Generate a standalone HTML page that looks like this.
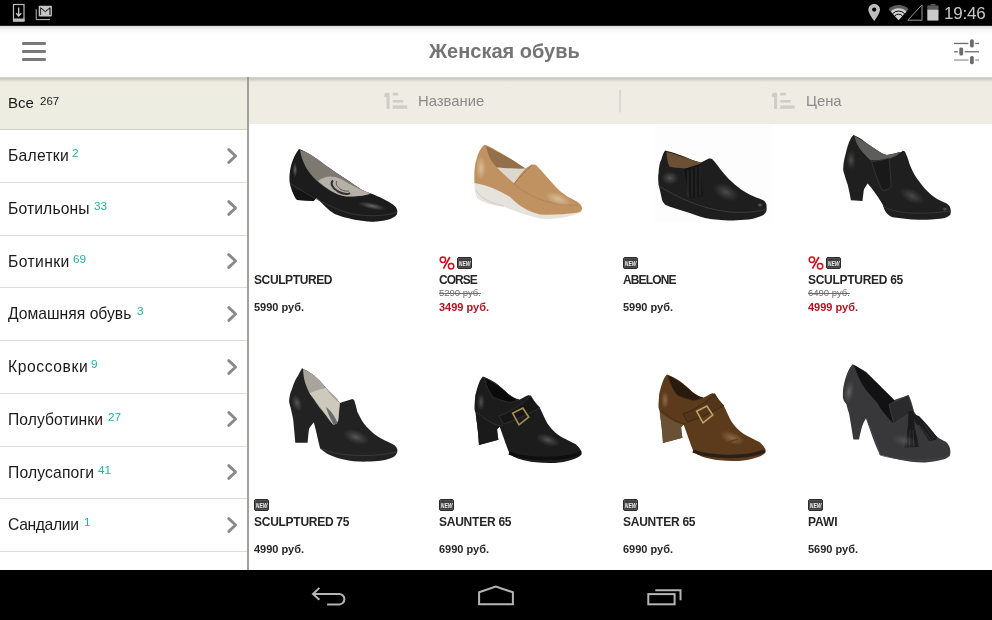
<!DOCTYPE html>
<html><head><meta charset="utf-8">
<style>
*{margin:0;padding:0;box-sizing:border-box}
html,body{width:992px;height:620px;overflow:hidden;background:#fff;font-family:"Liberation Sans",sans-serif}
.a{position:absolute}
.t{position:absolute;white-space:nowrap;line-height:1;will-change:transform}
#status{left:0;top:0;width:992px;height:26px;background:linear-gradient(#000 25px,#262626 25px);z-index:5}
#action{left:0;top:25px;width:992px;height:52px;background:#fff}
#action .sh2{left:0;top:1px;width:992px;height:10px;background:linear-gradient(#dcdcdc,#e8e8e8 15%,#f5f5f5 35%,#fbfbfb 60%,#fff)}
#action .sh{left:0;top:0;width:992px;height:11px;background:linear-gradient(#ececec,#fff)}
#side{left:0;top:77px;width:247px;height:493px;background:#fff;overflow:hidden}
#sdiv{left:247px;top:77px;width:2px;height:493px;background:#a0a09c}
#sel{left:0;top:77px;width:247px;height:52px;background:#eeede1}
.sep{position:absolute;left:0;width:247px;height:1px;background:#dcdcd8}
#sort{left:249px;top:77px;width:743px;height:47px;background:#efece4}
#hshadow{left:0;top:77px;width:992px;height:5px;background:linear-gradient(rgba(150,150,130,.26) 0px,rgba(150,150,130,.26) 1px,rgba(140,140,120,.38) 1px,rgba(140,140,120,.38) 2px,rgba(140,140,120,.27) 2px,rgba(140,140,120,.27) 3px,rgba(140,140,120,.17) 3px,rgba(140,140,120,.17) 4px,rgba(140,140,120,.08) 4px)}
#nav{left:0;top:570px;width:992px;height:50px;background:#000}
.it{font-size:15.7px;color:#1a1a1a}
.cnt{font-size:11.8px;color:#22b39a}
.nm{font-size:12px;font-weight:bold;color:#262626;letter-spacing:-0.4px}
.pr{font-size:11px;font-weight:bold;color:#262626}
.prs{font-size:11px;font-weight:bold;color:#b3121e}
.old{font-size:9.5px;color:#6d6d6d;text-decoration:line-through}
.chev{position:absolute;left:226px;width:12px;height:16px}
.newb{position:absolute;width:15px;height:12px;background:#4a4a4a;border-radius:1.5px;color:#fff;font-size:6.5px;font-weight:bold;font-style:italic;line-height:12px;text-align:center;letter-spacing:-0.3px}
</style></head><body>

<!-- status bar -->
<div id="status" class="a">
<svg class="a" style="left:0;top:0" width="992" height="25">
  <!-- download -->
  <rect x="13.5" y="4.5" width="10.5" height="16.5" fill="none" stroke="#bdbdbd" stroke-width="1.2"/>
  <rect x="13" y="18.5" width="11.5" height="3" fill="#bdbdbd"/>
  <path d="M18.7 7.5V15.5M16.2 13.2L18.7 16L21.2 13.2" fill="none" stroke="#c8c8c8" stroke-width="1.3"/>
  <!-- gmail -->
  <path d="M36.2 9.2V19.6H50" fill="none" stroke="#bdbdbd" stroke-width="1"/>
  <rect x="38.7" y="5.8" width="13.2" height="10.8" rx="0.8" fill="#c4c4c4"/>
  <path d="M40.6 7.8L45.3 11.6L50 7.8V15" fill="none" stroke="#000" stroke-width="1"/>
  <path d="M40.6 7.8V15" stroke="#000" stroke-width="0.8"/>
  <!-- location -->
  <path d="M874.2 4C870.8 4 868.3 6.6 868.3 9.8C868.3 13.6 874.2 21 874.2 21S880 13.6 880 9.8C880 6.6 877.6 4 874.2 4Z" fill="#bdbdbd"/>
  <circle cx="874.2" cy="9.6" r="2.1" fill="#000"/>
  <!-- wifi -->
  <path d="M888.6 9.2A14 14 0 0 1 908.6 9.2L898.6 20.2Z" fill="#5c5c5c"/>
  <path d="M890.8 11.6A11 11 0 0 1 906.4 11.6L898.6 20.2Z" fill="#cfcfcf"/>
  <path d="M892.6 13.6A8.3 8.3 0 0 1 904.6 13.6" fill="none" stroke="#000" stroke-width="1"/>
  <path d="M894.7 15.9A5.3 5.3 0 0 1 902.5 15.9" fill="none" stroke="#000" stroke-width="1"/>
  <!-- signal -->
  <path d="M907.8 20.2L922 4.8V20.2Z" fill="none" stroke="#9a9a9a" stroke-width="1"/>
  <!-- battery -->
  <rect x="930.5" y="4" width="5" height="1.6" fill="#5a5a5a"/>
  <rect x="927.3" y="5.5" width="11.2" height="4" fill="#5a5a5a"/>
  <rect x="927.3" y="9.5" width="11.2" height="11.1" fill="#c9c9c9"/>
</svg>
<div class="t" style="left:944px;top:5px;font-size:17px;color:#c8c8c8;letter-spacing:-0.2px">19:46</div>
</div>

<!-- action bar -->
<div id="action" class="a">
  <div class="a sh2"></div>
  <svg class="a" style="left:0;top:0" width="992" height="52">
    <rect x="22" y="17" width="24" height="3" rx="1" fill="#7a7a7a"/>
    <rect x="22" y="25" width="24" height="3" rx="1" fill="#7a7a7a"/>
    <rect x="22" y="33" width="24" height="3" rx="1" fill="#7a7a7a"/>
    <!-- filter icon -->
    <g fill="#6c6c70">
      <rect x="954" y="17.8" width="14.5" height="1.3"/>
      <rect x="975.2" y="17.8" width="3.8" height="1.3"/>
      <rect x="970" y="14.2" width="3.8" height="8.2" rx="1.6"/>
      <rect x="954" y="26.1" width="3.8" height="1.3"/>
      <rect x="964.6" y="26.1" width="14.4" height="1.3"/>
      <rect x="959.3" y="22.4" width="3.8" height="8.2" rx="1.6"/>
      <rect x="954" y="34.4" width="14.5" height="1.3" fill="#9a9a9e"/>
      <rect x="975.2" y="34.4" width="3.8" height="1.3" fill="#9a9a9e"/>
      <rect x="970" y="31" width="3.8" height="8.2" rx="1.6"/>
    </g>
  </svg>
  <div class="t" style="left:429px;top:16px;font-size:20px;font-weight:bold;color:#747478">Женская обувь</div>
</div>

<!-- sidebar -->
<div id="side" class="a"></div>
<div id="sel" class="a"></div>
<div class="t" style="left:8.3px;top:95.2px;font-size:15px;color:#1a1a1a">Все</div>
<div class="t" style="left:40px;top:95.6px;font-size:11.5px;color:#1a1a1a">267</div>

<div id="items">
<div class="sep" style="top:129.00px;background:#cfcfc7"></div>
<div class="t it" style="left:8px;top:148.21px;letter-spacing:0.25px">Балетки</div>
<div class="t cnt" style="left:72.3px;top:148.11px">2</div>
<svg class="a" style="left:222px;top:143.70px" width="20" height="24"><path d="M6.8 5.6L13.6 12L6.8 18.4" fill="none" stroke="#8a8a8a" stroke-width="2.9" stroke-linecap="round" stroke-linejoin="round"/></svg>
<div class="sep" style="top:181.75px"></div>
<div class="t it" style="left:8px;top:200.96px;letter-spacing:0.12px">Ботильоны</div>
<div class="t cnt" style="left:93.8px;top:200.86px">33</div>
<svg class="a" style="left:222px;top:196.45px" width="20" height="24"><path d="M6.8 5.6L13.6 12L6.8 18.4" fill="none" stroke="#8a8a8a" stroke-width="2.9" stroke-linecap="round" stroke-linejoin="round"/></svg>
<div class="sep" style="top:234.50px"></div>
<div class="t it" style="left:8px;top:253.71px;letter-spacing:0.38px">Ботинки</div>
<div class="t cnt" style="left:73.2px;top:253.61px">69</div>
<svg class="a" style="left:222px;top:249.20px" width="20" height="24"><path d="M6.8 5.6L13.6 12L6.8 18.4" fill="none" stroke="#8a8a8a" stroke-width="2.9" stroke-linecap="round" stroke-linejoin="round"/></svg>
<div class="sep" style="top:287.25px"></div>
<div class="t it" style="left:8px;top:306.46px;letter-spacing:0px">Домашняя обувь</div>
<div class="t cnt" style="left:136.9px;top:306.36px">3</div>
<svg class="a" style="left:222px;top:301.95px" width="20" height="24"><path d="M6.8 5.6L13.6 12L6.8 18.4" fill="none" stroke="#8a8a8a" stroke-width="2.9" stroke-linecap="round" stroke-linejoin="round"/></svg>
<div class="sep" style="top:340.00px"></div>
<div class="t it" style="left:8px;top:359.21px;letter-spacing:0.57px">Кроссовки</div>
<div class="t cnt" style="left:91.4px;top:359.11px">9</div>
<svg class="a" style="left:222px;top:354.70px" width="20" height="24"><path d="M6.8 5.6L13.6 12L6.8 18.4" fill="none" stroke="#8a8a8a" stroke-width="2.9" stroke-linecap="round" stroke-linejoin="round"/></svg>
<div class="sep" style="top:392.75px"></div>
<div class="t it" style="left:8px;top:411.96px;letter-spacing:0.06px">Полуботинки</div>
<div class="t cnt" style="left:108.4px;top:411.86px">27</div>
<svg class="a" style="left:222px;top:407.45px" width="20" height="24"><path d="M6.8 5.6L13.6 12L6.8 18.4" fill="none" stroke="#8a8a8a" stroke-width="2.9" stroke-linecap="round" stroke-linejoin="round"/></svg>
<div class="sep" style="top:445.50px"></div>
<div class="t it" style="left:8px;top:464.71px;letter-spacing:0.14px">Полусапоги</div>
<div class="t cnt" style="left:98.3px;top:464.61px">41</div>
<svg class="a" style="left:222px;top:460.20px" width="20" height="24"><path d="M6.8 5.6L13.6 12L6.8 18.4" fill="none" stroke="#8a8a8a" stroke-width="2.9" stroke-linecap="round" stroke-linejoin="round"/></svg>
<div class="sep" style="top:498.25px"></div>
<div class="t it" style="left:8px;top:517.46px;letter-spacing:-0.36px">Сандалии</div>
<div class="t cnt" style="left:83.9px;top:517.36px">1</div>
<svg class="a" style="left:222px;top:512.95px" width="20" height="24"><path d="M6.8 5.6L13.6 12L6.8 18.4" fill="none" stroke="#8a8a8a" stroke-width="2.9" stroke-linecap="round" stroke-linejoin="round"/></svg>
<div class="sep" style="top:551.00px"></div>
<svg class="a" style="left:222px;top:565.70px" width="20" height="24"><path d="M6.8 5.6L13.6 12L6.8 18.4" fill="none" stroke="#8a8a8a" stroke-width="2.9" stroke-linecap="round" stroke-linejoin="round"/></svg>
</div><!--/items-->

<!-- sort bar -->
<div id="sort" class="a">
  <svg class="a" style="left:0;top:0" width="743" height="46">
    <g fill="#cfcdc8">
      <path d="M135.5 16.5L138 15.8H140.6V32H137.5V19.8L135.5 20.4Z"/>
      <rect x="143.7" y="15.7" width="5.5" height="2.8"/>
      <rect x="143.7" y="23" width="10.5" height="2.6"/>
      <rect x="143.7" y="28.4" width="14.5" height="3.4"/>
    </g>
    <g fill="#cfcdc8" transform="translate(387.5,0)">
      <path d="M135.5 16.5L138 15.8H140.6V32H137.5V19.8L135.5 20.4Z"/>
      <rect x="143.7" y="15.7" width="5.5" height="2.8"/>
      <rect x="143.7" y="23" width="10.5" height="2.6"/>
      <rect x="143.7" y="28.4" width="14.5" height="3.4"/>
    </g>
    <rect x="370.2" y="12.6" width="1.8" height="22.8" fill="#d8d7d0"/>
  </svg>
  <div class="t" style="left:169.3px;top:16.6px;font-size:14.8px;color:#8a8a8a">Название</div>
  <div class="t" style="left:557px;top:16.6px;font-size:14.8px;color:#8a8a8a">Цена</div>
</div>
<div id="hshadow" class="a"></div>
<div id="sdiv" class="a"></div>

<!--shoes--><svg class="a" style="left:0;top:0" width="992" height="620" id="shoes"><defs>
 <linearGradient id="gBlk" x1="0" y1="0" x2="1" y2="1"><stop offset="0" stop-color="#2a2a2a"/><stop offset="0.5" stop-color="#1b1b1b"/><stop offset="1" stop-color="#2e2e2e"/></linearGradient>
 <radialGradient id="hl"><stop offset="0" stop-color="#b0b0b0" stop-opacity="0.9"/><stop offset="1" stop-color="#909090" stop-opacity="0"/></radialGradient>
 <radialGradient id="hl2"><stop offset="0" stop-color="#808080" stop-opacity="0.8"/><stop offset="1" stop-color="#606060" stop-opacity="0"/></radialGradient>
 <linearGradient id="gTan" x1="0" y1="0" x2="1" y2="1"><stop offset="0" stop-color="#c79d6f"/><stop offset="1" stop-color="#b88a5a"/></linearGradient>
 <linearGradient id="gBrn" x1="0" y1="0" x2="1" y2="1"><stop offset="0" stop-color="#6e4a2a"/><stop offset="1" stop-color="#5a3a20"/></linearGradient>
 <radialGradient id="hlT"><stop offset="0" stop-color="#dcc09c" stop-opacity="0.9"/><stop offset="1" stop-color="#dcc09c" stop-opacity="0"/></radialGradient>
 <filter id="brown" x="0" y="0" width="100%" height="100%" color-interpolation-filters="sRGB"><feColorMatrix type="matrix" values="0 0 0 0 0.38  0 0 0 0 0.25  0 0 0 0 0.14  0 0 0 1 0"/></filter>
 <radialGradient id="hlB"><stop offset="0" stop-color="#a88460" stop-opacity="0.9"/><stop offset="1" stop-color="#a88460" stop-opacity="0"/></radialGradient>
 <filter id="bl" x="-50%" y="-50%" width="200%" height="200%"><feGaussianBlur stdDeviation="1.2"/></filter>
 <filter id="bl2" x="-50%" y="-50%" width="200%" height="200%"><feGaussianBlur stdDeviation="0.6"/></filter>
</defs>
<!--s1-->
<path d="M299,149 C304,150 316,158 325,165 C335,172 352,183 362,190 C366,192 369,193 371,193.5 C380,197 388,201 393,204.5 C397,207.5 398,211 397,214 C395,218 388,220.5 377,221.6 C368,222 355,220 345,217.4 C340,216 337,215 335,214.3 C328,210 322,203 316.5,198 L313.5,201 L297.5,200 C294,196 290,188 289.5,181 C289,170 292,158 299,149 Z" fill="#1c1c1c"/>
<path d="M300,150 C310,153 318,159 325,165 C335,172 352,183 362,190 C366,192 369,193 371,193.5 C366,195.5 355,197 345,196 C335,195 325,188 316,180 C308,172 302,163 300,150 Z" fill="#7d7971"/>
<path d="M318,181 C326,188 336,195 346,196.5 C356,197 366,195.5 370,193.5 C360,190 350,184 340,178.5 C332,175 324,176 318,181Z" fill="#b5b1a8"/>
<path d="M333,180.5 C330,183 332,188 338,191.5 C343,194 348,194.5 350,193" fill="none" stroke="#303030" stroke-width="2"/><path d="M337,181 C335,183.5 337,187 341,189.5 C344,191 347,191.5 349,191" fill="none" stroke="#5a5a5a" stroke-width="1"/>
<path d="M297,200 L313.5,201 L316.5,198 C312,193 300,190 292,189 C293,194 295,198 297,200Z" fill="#141414"/>
<path d="M290,183 C300,190 325,205 345,212 C360,217 385,217 397,212" fill="none" stroke="#3c3c3c" stroke-width="0.8"/>
<ellipse cx="372" cy="206" rx="15" ry="3.5" transform="rotate(12 372 206)" fill="url(#hl2)"/>
<ellipse cx="295" cy="170" rx="2.2" ry="8" fill="url(#hl2)"/>

<!--s2-->
<path d="M474.5,178 C474,188 475,195 478,199 C482,202 492,205 504,207 C515,211 528,216 540,218.5 C555,220 570,217 581,212.6 C582,211 582,210 581,209 Z" fill="#e6e3dd"/>
<path d="M476,190 C480,198 490,203 504,206" fill="none" stroke="#d2cec6" stroke-width="1"/>
<path fill-rule="nonzero" d="M484.7,144.8 C489,146 496,150 509.5,158.3 C516,162 521,166 525.3,168.5 L531.8,164.6 C534,164.3 535.5,164.6 536.3,165.2 C543,172 551,182 558.9,190 C565,195.5 570,198 575,200.5 C580,203 582.5,206 582,209 C581.5,211.5 579,212.5 576,212.8 C565,214.5 550,215 540,214.5 C528,212 518,205 510,197 C500,191 488,185 474.5,183 C474,175 474.5,165 476.2,160.6 C478,153 481,147 484.7,144.8Z" fill="#c09262"/>
<path d="M486,146 C492,149 502,154 509.5,158.3 C516,162 521,166 525.3,168.5 C518,169 508,168.5 497,167.5 C491,162 488,155 486,146Z" fill="#947049"/>
<path d="M497,167.5 C508,168.5 518,169 525.3,168.5 L519.7,175.3 L514,183.2 C508,178 501,172 497,167.5Z" fill="#ddd8ce"/>
<path d="M531.8,165 C526,171 519,177 514,184" fill="none" stroke="#9a7650" stroke-width="1"/>
<path d="M514,184 C530,198 555,207 578,205" fill="none" stroke="#a88258" stroke-width="0.8"/>
<ellipse cx="481" cy="168" rx="5" ry="12" fill="url(#hlT)"/>
<ellipse cx="558" cy="199" rx="14" ry="6" transform="rotate(20 558 199)" fill="url(#hlT)"/>

<!--s3-->
<rect x="654.5" y="124.8" width="117" height="98" fill="#fdfdfd"/>
<path d="M665.2,150.6 C672,152 683,156 691.7,159.8 C695,161 698,162 701,162.5 L708.9,158.5 C710.5,158.3 711.5,158.6 712.1,159.1 C715,162 718,166 720.6,169.4 C724,174 728,178 731.5,181.5 C736,185.5 740,189 743.5,191.1 C748,194 752,196 756.9,197.8 C760,199 762.5,199.8 764.1,200.8 C766,202.5 767,205 766.5,206.9 C766.8,208.5 766.6,209.5 766.5,210.5 C766,212.5 764.5,214.5 762.9,215.3 C758,217.5 753,219 748.4,219.6 C740,220.5 732,220.5 724.2,220.2 C716,219.8 708,218.8 705,218 C698,216 691,213.5 685,211.5 C677,209 670,207 665.2,204.8 C663,202 662,200.5 662,199.5 C661,195 660,190 658.6,185 C658,178 658,176 658.6,173.1 C659,166 660,162 661.3,159.8 C662.5,155 664,152 665.2,150.6Z" fill="#1e1e1e"/>
<path d="M666.5,152 C675,154 686,158 695,161 L701,162.5 C700,164 699,165 698.3,165.1 C694,167 690,168 685,168.5 C678,168 673,167.5 669.2,166.5 C667.5,162 666.5,157 666.5,152Z" fill="#6d5033"/>
<path d="M684,169 L700,164 L703,196 L690,198Z" fill="#151515"/>
<path d="M688,170V197M692,168.5V197M696,167V197M700,166V196" stroke="#3c3c3c" stroke-width="0.7"/>
<path d="M659,186 C675,196 700,209 730,212 C745,213 758,212 766,209" fill="none" stroke="#3e3e3e" stroke-width="0.9"/>
<ellipse cx="670" cy="178" rx="9" ry="7" fill="url(#hl2)" opacity="0.7"/>
<ellipse cx="726" cy="192" rx="14" ry="8" transform="rotate(25 726 192)" fill="url(#hl2)" opacity="0.6"/>
<ellipse cx="760" cy="205" rx="3" ry="2" fill="url(#hl)" opacity="0.6"/>

<!--s4-->
<path d="M853.5,135.1 C858,137 862,139.5 863.8,140.9 C868,144 873,147.5 876.7,150 C880,152.5 884,154.5 887.1,155.1 C892,154 897,152.5 901.3,151.9 L902.6,150.8 C904,151 905,151.5 905.2,152.1 C907,156 908.5,160 909.7,164.4 C911.5,169 913.5,173 916.1,177.3 C919,181.5 922,185.5 925.2,188.9 C928.5,192.5 932,195.5 935.5,197.9 C939,200 942.5,201.5 945.8,203.1 C948.5,204.5 950,206.5 950.3,208.2 C951,210.5 951,213 950.3,214.7 C948.5,216.5 945.5,218 941.9,218.5 C934,219.5 926,220 918.7,219.8 C910,219.5 900,218.5 892.9,217.3 C887,215.5 884,210 883.2,205.5 C880,200 878,197 876.7,195.2 C873,190 870,186 867.7,183.5 C866,186 864.5,188 863.8,190 C863.3,194 862.8,198 862.5,201 L850.9,200.3 C850,195 849,190 847.7,184.8 C846.5,181 845,177.5 844.5,174.5 C843.5,172 843,170 843.2,168 C843.5,162 844.5,158 845.7,153.8 C847,148 848.5,143 850.3,139.6 C851.5,137.5 852.5,136 853.5,135.1Z" fill="#1f1f1f"/>
<path d="M854.5,136 C860,139 868,144 876.7,150 C880,152.5 884,154.5 887.1,155.1 C892,154 897,152.5 901.3,151.9 C898,154.5 893,158 887.1,159 C880,160 875,160.5 870.3,160.3 C865,155 860,150 857.4,144.8 C856,142 855,139 854.5,136Z" fill="#5d5d5b"/>
<path d="M871.6,161.6 C878,161 885,159.5 889,158 C890,168 891,180 891,186 C889,190 885,191 882,190 C878,182 874,170 871.6,161.6Z" fill="#191919" stroke="#3a3a3a" stroke-width="0.8"/>
<path d="M883,206 C895,214 920,215 950,211" fill="none" stroke="#3a3a3a" stroke-width="0.9"/>
<ellipse cx="851" cy="160" rx="5" ry="10" fill="url(#hl2)" opacity="0.6"/>
<ellipse cx="912" cy="196" rx="14" ry="7" transform="rotate(25 912 196)" fill="url(#hl2)" opacity="0.55"/>
<ellipse cx="945" cy="209" rx="3" ry="2" fill="url(#hl)" opacity="0.5"/>

<!--s5-->
<path d="M302.1,368.2 C306,370 309,372 312.4,374.3 C317,378 322,383 326.1,388 C330,392.5 334,396 337,399 C338,400.5 339,402 339.8,403.1 L352.3,399 C353.2,399.3 353.8,399.8 354.2,400.3 C355.5,404 356.5,408 357.4,411.9 C359.5,416 361.5,420 363.9,423.5 C367,427.5 370.5,431 374.2,433.9 C378.5,437 383,439.5 387.1,441.6 C390,443 393,444.5 394.8,445.5 C396.5,447 397.5,449 397.4,450.6 C397.6,453 396,455.5 393.5,457.1 C389,459.5 383,460.5 378.1,461 C372,461.5 365,461.8 358.7,461.6 C352,461 345,460 339.4,458.4 C334,457 330,455 326.5,453.2 C323.5,451.5 321.5,449.5 320,448.1 C318,440 316,430 313.8,422.3 C311.5,425 310,427 309,429.1 C308.5,433 308,438 307.6,442.8 L295.3,442.8 C294.5,435 294,427 293.2,419.5 C292.3,415 291.5,411 290.5,407.2 C289.5,404 289,402 289.1,400.4 C289.5,396 290.5,392 291.8,389.4 C293.5,384 295.5,379 298,375.7 C299.5,372.5 301,370 302.1,368.2Z" fill="#222"/>
<path d="M303,369 C306,370.5 309,372 312.4,374.3 C317,378 322,383 326.1,388 C330,392.5 334,396 337,399 C338,400.5 339,402 339.8,403.1 C339.5,409 339,416 338.1,421 C336.5,422.5 335,424 333.6,425 C330,421 325,414 319.2,407.2 C315,401 312,397 309.7,393.5 C307.5,389 306,385 305.5,383.9 C304,379 303.2,374 303,369Z" fill="#a8a49c"/>
<path d="M309.7,393.5 C315,400 322,409 330.2,420.9 L333.6,425 C335,424 336.5,422.5 338.1,421 C338.5,414 339,409 339.8,403.1 C336,400 330,395 326.1,388 C320,389 314,391 309.7,393.5Z" fill="#cdc9bd"/>
<path d="M326,407 C330,410 335,416 337.7,423.6 L333.6,425 C331,420 328,414 326,407Z" fill="#6a6a6a"/>
<path d="M320,448 C335,456 370,458 397,452" fill="none" stroke="#3c3c3c" stroke-width="0.9"/>
<ellipse cx="297" cy="403" rx="5" ry="9" transform="rotate(-20 297 403)" fill="url(#hl2)" opacity="0.7"/>
<ellipse cx="356" cy="437" rx="14" ry="7" transform="rotate(20 356 437)" fill="url(#hl2)" opacity="0.7"/>

<!--s6-->
<path d="M482.9,376.5 C488,378.5 492,380.5 495.8,382.9 C500,386 504.5,390.5 508.7,394.5 C512,397 515.5,399 519,399.7 C522,398.5 525,396.5 528.1,395.2 C529,395 530,395.2 530.7,395.8 C532,398 533.5,400.5 534.5,402.3 C536,404 538,406 539.7,407.4 C542,412 544.5,418 547.4,423.5 C550,427 552.5,430 555.2,432.6 C558.5,435.5 562,437.5 565.5,439 C569,441 572.5,442.5 575.8,444.2 C578,446 579.5,448 580.3,449.4 C581,450 581.5,451 581.6,451.9 C581.8,453.5 581.2,454.8 580.3,455.8 C578,457.5 575,459 571.9,459.7 C566,461.5 560.5,462.5 555.2,462.9 C548,463.2 542,463 535.8,462.3 C529,461.5 523,460 517.7,458.4 C515,457.5 512,456 510,454.5 C507,448 503,436 499.7,426.8 C499,427.5 497.5,428.5 497.1,429.4 C497.3,433 498,437 498.4,439.7 L479,444.9 C478.5,438 478,431 477.1,424.2 C476.5,420 476,417 475.8,413.9 C475,411 474.5,410 474.5,408.7 C474.5,404 475,400 475.2,395.8 C476.5,391 477.5,386 479,382.9 C480,380.5 481.5,378 482.9,376.5Z" fill="#1c1c1c"/>
<path d="M477.1,424.2 C476.5,420 476,417 475.8,413.9 C483,420 492,425 499.7,426.8 C499,427.5 497.5,428.5 497.1,429.4 C497.3,433 498,437 498.4,439.7 L479,444.9 C478.5,438 478,431 477.1,424.2Z" fill="#1a1a1a"/>
<path d="M484,377.5 C490,380 500,386 508.7,394.5 C512,397 515.5,399 519,399.7 C515,401 512,402.3 508.7,402.3 C503,401 497,399 493.2,397.1 C489,392 486,385 484,377.5Z" fill="#0a0a0a" stroke="#3a3a3a" stroke-width="0.6"/>
<path d="M503.6,424.2 L499,416 C510,412 520,406 530.7,395.8 C533,400 536,404 539.7,407.4 C530,414 515,420 503.6,424.2Z" fill="#161616" stroke="#3a3a3a" stroke-width="0.7"/>
<path d="M477,412 C485,420 497,426 502,426" fill="none" stroke="#3a3a3a" stroke-width="0.7"/>
<path d="M509,453 C525,459.5 560,461 581,453" fill="none" stroke="#0e0e0e" stroke-width="3.4"/>
<ellipse cx="481" cy="402" rx="4" ry="9" fill="url(#hl2)" opacity="0.7"/>
<ellipse cx="548" cy="440" rx="13" ry="6" transform="rotate(20 548 440)" fill="url(#hl2)" opacity="0.7"/>
<path d="M544.8,444.2 C548,442.5 551,441.8 553.9,441.6" fill="none" stroke="#3a3a3a" stroke-width="0.7"/>
<path d="M512.6,413.2 L522.9,408.1 L528.7,417.1 L519,424.8Z" fill="none" stroke="#a89050" stroke-width="1.6"/>

<!--s7--><g transform="translate(184,-2)">
<path d="M482.9,376.5 C488,378.5 492,380.5 495.8,382.9 C500,386 504.5,390.5 508.7,394.5 C512,397 515.5,399 519,399.7 C522,398.5 525,396.5 528.1,395.2 C529,395 530,395.2 530.7,395.8 C532,398 533.5,400.5 534.5,402.3 C536,404 538,406 539.7,407.4 C542,412 544.5,418 547.4,423.5 C550,427 552.5,430 555.2,432.6 C558.5,435.5 562,437.5 565.5,439 C569,441 572.5,442.5 575.8,444.2 C578,446 579.5,448 580.3,449.4 C581,450 581.5,451 581.6,451.9 C581.8,453.5 581.2,454.8 580.3,455.8 C578,457.5 575,459 571.9,459.7 C566,461.5 560.5,462.5 555.2,462.9 C548,463.2 542,463 535.8,462.3 C529,461.5 523,460 517.7,458.4 C515,457.5 512,456 510,454.5 C507,448 503,436 499.7,426.8 C499,427.5 497.5,428.5 497.1,429.4 C497.3,433 498,437 498.4,439.7 L479,444.9 C478.5,438 478,431 477.1,424.2 C476.5,420 476,417 475.8,413.9 C475,411 474.5,410 474.5,408.7 C474.5,404 475,400 475.2,395.8 C476.5,391 477.5,386 479,382.9 C480,380.5 481.5,378 482.9,376.5Z" fill="#5c3b1d"/>
<path d="M477.1,424.2 C476.5,420 476,417 475.8,413.9 C483,420 492,425 499.7,426.8 C499,427.5 497.5,428.5 497.1,429.4 C497.3,433 498,437 498.4,439.7 L479,444.9 C478.5,438 478,431 477.1,424.2Z" fill="#6a5034"/>
<path d="M484,377.5 C490,380 500,386 508.7,394.5 C512,397 515.5,399 519,399.7 C515,401 512,402.3 508.7,402.3 C503,401 497,399 493.2,397.1 C489,392 486,385 484,377.5Z" fill="#2a1a0e" stroke="#3a2614" stroke-width="0.6"/>
<path d="M503.6,424.2 L499,416 C510,412 520,406 530.7,395.8 C533,400 536,404 539.7,407.4 C530,414 515,420 503.6,424.2Z" fill="#52351a" stroke="#34220f" stroke-width="0.7"/>
<path d="M477,412 C485,420 497,426 502,426" fill="none" stroke="#3a2614" stroke-width="0.7"/>
<path d="M509,453 C525,459.5 560,461 581,453" fill="none" stroke="#2a2018" stroke-width="3.4"/>
<ellipse cx="481" cy="402" rx="4" ry="9" fill="url(#hlB)" opacity="0.7"/>
<ellipse cx="548" cy="440" rx="13" ry="6" transform="rotate(20 548 440)" fill="url(#hlB)" opacity="0.7"/>
<path d="M544.8,444.2 C548,442.5 551,441.8 553.9,441.6" fill="none" stroke="#3a2614" stroke-width="0.7"/>
<path d="M512.6,413.2 L522.9,408.1 L528.7,417.1 L519,424.8Z" fill="none" stroke="#bca46a" stroke-width="1.6"/>
</g>
<!--s8-->
<path d="M852.7,364.3 C858,367 862,369.5 866.1,372 C871,377 876,382 880.1,386.1 C884,390 888,394 891.3,397.3 C892.5,398.5 893.5,399.5 894.1,400.1 L908.4,395.3 C910.5,400 912,405 913.5,410.8 C916,415 919,419 922.6,422.4 C927,427.5 932,432.5 936.8,436.6 C940,439 943,440.5 945.8,441.8 C948.5,444 950,447 950.3,450.8 C950.5,452.8 950.2,454.5 949.7,456 C947.5,458 945,459.2 941.9,459.8 C936,461.5 931,462.2 925.2,462.4 C916,462.5 907,461.5 899.4,459.8 C892,458 886,456.5 880,454.7 C875,445 870,430 866.1,418.3 C864.5,420.5 863.3,423 862.5,425.3 C861,430 860,435 859,439.4 L853.4,439.4 C852,431 850.5,422 849.2,414.1 C848,410 847,407 846.4,404.3 C844.5,402 843.2,400 842.9,397.3 C842.8,393 843,389.5 843.6,386.1 C844.5,381 846,376 847.8,372 C849,369 851,366 852.7,364.3Z" fill="#38383a"/>
<path d="M854,365 C860,368.5 866,372 871,377 C876,382 884,390 891.3,397.3 L894.1,400.1 C894.5,408 894.5,416 894.1,424 C887,417 881,410 877.3,402.9 C873,398 869,394 866.1,390.3 C861,383 857,375 854,365Z" fill="#121212"/>
<path d="M889,404.4 L908.4,395.3 C910.5,400 912,405 913.5,410.8 C905,416 897,421 894,424 C892,417 890,410 889,404.4Z" fill="#2a2a2c" stroke="#484848" stroke-width="0.6"/>
<path d="M908.5,411 L913.5,411 L914.5,426 C916,433 918,440 918.5,447 L904.5,447.5 C905.5,440 907,433 908,426Z" fill="#1a1a1a"/>
<path d="M907,433 L906,447 M910,430 L909.5,447 M913,430 L914,447" stroke="#3e3e40" stroke-width="0.7"/>
<path d="M913,414 L919,416 C925,422 931,429 937,437 L936,440 L929,441 C925,434 920,427 915,422Z" fill="#1c1c1c"/>
<path d="M919,425 L931,440 M923,423 L934,438" stroke="#3e3e40" stroke-width="0.7"/>
<path d="M866,418 C872,432 880,450 880,455 M880,455 C900,461 935,463 950,455" fill="none" stroke="#4a4a4c" stroke-width="0.8"/>
<ellipse cx="849" cy="392" rx="5" ry="12" transform="rotate(10 849 392)" fill="url(#hl2)" opacity="0.8"/>
<ellipse cx="905" cy="441" rx="14" ry="7" transform="rotate(15 905 441)" fill="url(#hl2)" opacity="0.5"/>

</svg><!--/shoes-->
<div id="grid">
<div class="t nm" style="left:254.2px;top:273.84px;letter-spacing:-0.39px">SCULPTURED</div>
<div class="t pr" style="left:254.2px;top:301.69px">5990 руб.</div>
<svg class="a" style="left:435.5px;top:252px" width="20" height="20"><g fill="none" stroke="#cf1020" stroke-width="1.5"><circle cx="6.9" cy="7.7" r="2.7"/><circle cx="15.1" cy="14.3" r="2.7"/><path d="M13.9 5L7.4 16.6" stroke-width="1.7"/></g></svg>
<svg class="a" style="left:456.7px;top:257px" width="15" height="12"><rect x="0.5" y="0.5" width="14" height="11" rx="1.5" fill="#3e3e3e" stroke="#2a2a2a" stroke-width="1"/><rect x="1.5" y="1.5" width="12" height="9" fill="none" stroke="#5c5c5c" stroke-width="0.6"/><text x="7.6" y="9" font-family="Liberation Sans" font-size="6.6" font-weight="bold" font-style="italic" text-anchor="middle" textLength="11.6" lengthAdjust="spacingAndGlyphs" fill="#f2f2f2">NEW</text></svg>
<div class="t nm" style="left:438.7px;top:273.84px;letter-spacing:-1.0px">CORSE</div>
<div class="t old" style="left:439.0px;top:288.46px">5290 руб.</div>
<div class="t prs" style="left:438.7px;top:301.69px">3499 руб.</div>
<svg class="a" style="left:623.0px;top:257px" width="15" height="12"><rect x="0.5" y="0.5" width="14" height="11" rx="1.5" fill="#3e3e3e" stroke="#2a2a2a" stroke-width="1"/><rect x="1.5" y="1.5" width="12" height="9" fill="none" stroke="#5c5c5c" stroke-width="0.6"/><text x="7.6" y="9" font-family="Liberation Sans" font-size="6.6" font-weight="bold" font-style="italic" text-anchor="middle" textLength="11.6" lengthAdjust="spacingAndGlyphs" fill="#f2f2f2">NEW</text></svg>
<div class="t nm" style="left:623.2px;top:273.84px;letter-spacing:-0.87px">ABELONE</div>
<div class="t pr" style="left:623.2px;top:301.69px">5990 руб.</div>
<svg class="a" style="left:804.5px;top:252px" width="20" height="20"><g fill="none" stroke="#cf1020" stroke-width="1.5"><circle cx="6.9" cy="7.7" r="2.7"/><circle cx="15.1" cy="14.3" r="2.7"/><path d="M13.9 5L7.4 16.6" stroke-width="1.7"/></g></svg>
<svg class="a" style="left:825.7px;top:257px" width="15" height="12"><rect x="0.5" y="0.5" width="14" height="11" rx="1.5" fill="#3e3e3e" stroke="#2a2a2a" stroke-width="1"/><rect x="1.5" y="1.5" width="12" height="9" fill="none" stroke="#5c5c5c" stroke-width="0.6"/><text x="7.6" y="9" font-family="Liberation Sans" font-size="6.6" font-weight="bold" font-style="italic" text-anchor="middle" textLength="11.6" lengthAdjust="spacingAndGlyphs" fill="#f2f2f2">NEW</text></svg>
<div class="t nm" style="left:807.7px;top:273.84px;letter-spacing:-0.29px">SCULPTURED 65</div>
<div class="t old" style="left:808.0px;top:288.46px">6490 руб.</div>
<div class="t prs" style="left:807.7px;top:301.69px">4999 руб.</div>
<svg class="a" style="left:254.0px;top:499px" width="15" height="12"><rect x="0.5" y="0.5" width="14" height="11" rx="1.5" fill="#3e3e3e" stroke="#2a2a2a" stroke-width="1"/><rect x="1.5" y="1.5" width="12" height="9" fill="none" stroke="#5c5c5c" stroke-width="0.6"/><text x="7.6" y="9" font-family="Liberation Sans" font-size="6.6" font-weight="bold" font-style="italic" text-anchor="middle" textLength="11.6" lengthAdjust="spacingAndGlyphs" fill="#f2f2f2">NEW</text></svg>
<div class="t nm" style="left:254.2px;top:515.84px;letter-spacing:-0.27px">SCULPTURED 75</div>
<div class="t pr" style="left:254.2px;top:543.69px">4990 руб.</div>
<svg class="a" style="left:438.5px;top:499px" width="15" height="12"><rect x="0.5" y="0.5" width="14" height="11" rx="1.5" fill="#3e3e3e" stroke="#2a2a2a" stroke-width="1"/><rect x="1.5" y="1.5" width="12" height="9" fill="none" stroke="#5c5c5c" stroke-width="0.6"/><text x="7.6" y="9" font-family="Liberation Sans" font-size="6.6" font-weight="bold" font-style="italic" text-anchor="middle" textLength="11.6" lengthAdjust="spacingAndGlyphs" fill="#f2f2f2">NEW</text></svg>
<div class="t nm" style="left:438.7px;top:515.84px;letter-spacing:-0.24px">SAUNTER 65</div>
<div class="t pr" style="left:438.7px;top:543.69px">6990 руб.</div>
<svg class="a" style="left:623.0px;top:499px" width="15" height="12"><rect x="0.5" y="0.5" width="14" height="11" rx="1.5" fill="#3e3e3e" stroke="#2a2a2a" stroke-width="1"/><rect x="1.5" y="1.5" width="12" height="9" fill="none" stroke="#5c5c5c" stroke-width="0.6"/><text x="7.6" y="9" font-family="Liberation Sans" font-size="6.6" font-weight="bold" font-style="italic" text-anchor="middle" textLength="11.6" lengthAdjust="spacingAndGlyphs" fill="#f2f2f2">NEW</text></svg>
<div class="t nm" style="left:623.2px;top:515.84px;letter-spacing:-0.24px">SAUNTER 65</div>
<div class="t pr" style="left:623.2px;top:543.69px">6990 руб.</div>
<svg class="a" style="left:807.5px;top:499px" width="15" height="12"><rect x="0.5" y="0.5" width="14" height="11" rx="1.5" fill="#3e3e3e" stroke="#2a2a2a" stroke-width="1"/><rect x="1.5" y="1.5" width="12" height="9" fill="none" stroke="#5c5c5c" stroke-width="0.6"/><text x="7.6" y="9" font-family="Liberation Sans" font-size="6.6" font-weight="bold" font-style="italic" text-anchor="middle" textLength="11.6" lengthAdjust="spacingAndGlyphs" fill="#f2f2f2">NEW</text></svg>
<div class="t nm" style="left:807.7px;top:515.84px;letter-spacing:-0.1px">PAWI</div>
<div class="t pr" style="left:807.7px;top:543.69px">5690 руб.</div>
</div><!--/grid-->

<!-- nav bar -->
<div id="nav" class="a">
  <svg class="a" style="left:0;top:0" width="992" height="50" fill="none" stroke="#b4b4b4" stroke-width="2">
    <path d="M313 24H339.2A5.2 5.2 0 0 1 339.2 34.4H327.1" />
    <path d="M319.4 17.9L313 24L319.4 29.8"/>
    <path d="M479.1 34.3V22.3L495.8 16.6L512.9 22.3V34.3Z"/>
    <rect x="648.3" y="24.1" width="26.3" height="10.2"/>
    <path d="M655.3 20.2H680.5V30.2"/>
  </svg>
</div>
</body></html>
